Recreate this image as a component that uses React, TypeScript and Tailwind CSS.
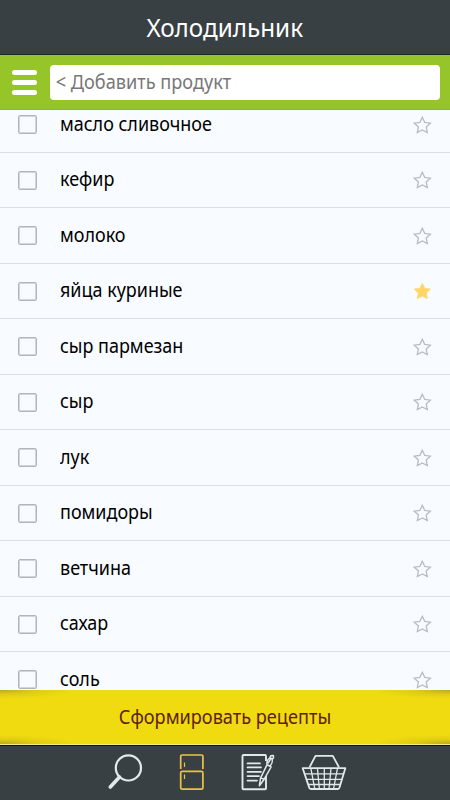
import { useState } from 'react';
import clsx from 'clsx';

interface Product {
  name: string;
  favorite?: boolean;
}

const PRODUCTS: Product[] = [
  { name: 'масло сливочное' },
  { name: 'кефир' },
  { name: 'молоко' },
  { name: 'яйца куриные', favorite: true },
  { name: 'сыр пармезан' },
  { name: 'сыр' },
  { name: 'лук' },
  { name: 'помидоры' },
  { name: 'ветчина' },
  { name: 'сахар' },
  { name: 'соль' },
];

function Star({ filled }: { filled?: boolean }) {
  return (
    <svg
      width="20"
      height="20"
      viewBox="0 0 20 20"
      className={filled ? 'fill-[#ffd566] stroke-[#ffd566]' : 'fill-none stroke-[#babdc0]'}
      strokeWidth={filled ? 0.8 : 1.3}
      strokeLinejoin="miter"
    >
      <path d="M10.3 2.3l2.4 5.1 5.7.7-4.2 3.9 1.1 5.6-5-2.7-5 2.7 1.1-5.6-4.2-3.9 5.7-.7z" />
    </svg>
  );
}

function SearchIcon() {
  return (
    <svg width="38" height="40" viewBox="0 0 38 40" fill="none" className="stroke-[#e3e8ec]">
      <circle cx="22.4" cy="15.9" r="12.6" strokeWidth="2.2" />
      <path d="M13.5 25L4.3 35" strokeWidth="3.6" strokeLinecap="round" />
    </svg>
  );
}

function FridgeIcon() {
  return (
    <svg width="28" height="40" viewBox="0 0 28 40" fill="none" className="stroke-[#e9c24b]">
      <path d="M2.7 17V4.5a1.5 1.5 0 0 1 1.5-1.5h19.2a1.5 1.5 0 0 1 1.5 1.5V17" strokeWidth="1.7" />
      <rect x="2.7" y="19.3" width="22.2" height="17.9" rx="1.5" strokeWidth="1.7" />
      <path d="M6.5 10.5V15M6.5 22.5V27" strokeWidth="1.2" />
    </svg>
  );
}

function RecipeIcon() {
  return (
    <svg width="36" height="40" viewBox="0 0 36 40" fill="none" className="stroke-[#e3e8ec]">
      <path d="M26 9V4a1 1 0 0 0-1-1H3.5a1 1 0 0 0-1 1v32.2a1 1 0 0 0 1 1H25a1 1 0 0 0 1-1V24" strokeWidth="1.9" />
      <path d="M7.5 11.4H20M7.5 15.4H21M7.5 19.8H21M7.5 24.1H19M7.5 28.6H17" strokeWidth="1.7" strokeLinecap="round" />
      <path
        d="M19.4 33.7l1.2-7.8 6.5-13.2 4 2.3-6.9 12.2zM20.6 25.9l3.6 1.3M27.1 12.7c-.8-2.3.5-5.6 3-7l2 1.2c.6 3-.6 6.3-3 7.4M29.9 5.7l1-2 2.5-.2.1 2.2-1.4 1.8M28 11.4l3-5"
        strokeWidth="1.5"
        strokeLinejoin="round"
      />
    </svg>
  );
}

function BasketIcon() {
  return (
    <svg width="48" height="40" viewBox="0 0 48 40" fill="none" className="stroke-[#e3e8ec]" strokeLinejoin="round">
      <path d="M9.5 15.3l6-11.4h17.3l6.2 11.4" strokeWidth="1.8" />
      <path d="M2.7 16.2h42.6l-5.8 19.4a1.8 1.8 0 0 1-1.8 1.4H11a1.8 1.8 0 0 1-1.8-1.4z" strokeWidth="1.8" />
      <path
        d="M4.7 21.8h38.6M6.4 27.3h35.2M8 32.5h32M10.8 16.2l4 20.8M17.4 16.2l2 20.8M24.3 16.2V37M31 16.2L29 37M37.5 16.2l-4 20.8"
        strokeWidth="1.3"
      />
    </svg>
  );
}

export default function App() {
  const [products, setProducts] = useState(PRODUCTS);
  const [checked, setChecked] = useState<string[]>([]);
  const [query, setQuery] = useState('');

  const toggleChecked = (name: string) => {
    setChecked((prev) => (prev.includes(name) ? prev.filter((n) => n !== name) : [...prev, name]));
  };

  const toggleFavorite = (name: string) => {
    setProducts((prev) => prev.map((p) => (p.name === name ? { ...p, favorite: !p.favorite } : p)));
  };

  return (
    <div className="flex h-[800px] w-[450px] flex-col overflow-hidden bg-[#f8fbff] font-['Noto_Sans','Open_Sans',sans-serif]">
      <header className="flex h-[55px] shrink-0 items-center justify-center border-b border-[#1c2c20] bg-[#394043]">
        <h1 className="scale-x-[0.97] text-[25px] leading-none text-white">Холодильник</h1>
      </header>

      <div className="flex h-[55px] shrink-0 items-center border-b border-[#8bb82e] bg-[#95c528] pr-2.5 pl-3">
        <button className="mr-[13px] flex w-[25px] flex-col gap-[5px]" aria-label="Меню">
          <span className="h-[5px] rounded-full bg-white" />
          <span className="h-[5px] rounded-full bg-white" />
          <span className="h-[5px] rounded-full bg-white" />
        </button>
        <div className="h-[35px] min-w-0 flex-1 rounded-[4px] bg-white">
          <input
            value={query}
            onChange={(e) => setQuery(e.target.value)}
            placeholder="&lt; Добавить продукт"
            className="h-full w-full origin-left scale-x-[0.955] px-1.5 text-[19px] text-black outline-none placeholder:text-[#777]"
          />
        </div>
      </div>

      {/* Product list */}
      <main className="min-h-0 flex-1 overflow-hidden">
        <ul className="-mt-[13px]">
          {products.map((p) => (
            <li key={p.name} className="flex h-[55.5px] items-center border-b border-[#dce0e4] pr-[18px] pl-[18px]">
              <button
                onClick={() => toggleChecked(p.name)}
                aria-label={p.name}
                className={clsx(
                  'mt-px size-[19px] shrink-0 rounded-[2px] border border-[#b3b6b9] shadow-[inset_0_0_0_1px_#d3d6d9]',
                  checked.includes(p.name) && 'bg-[#95c528]'
                )}
              />
              <span className="ml-[23px] flex-1 origin-left scale-x-[0.945] text-[19px] leading-none text-black">
                {p.name}
              </span>
              <button onClick={() => toggleFavorite(p.name)} className="mt-px" aria-label="Избранное">
                <Star filled={p.favorite} />
              </button>
            </li>
          ))}
        </ul>
      </main>

      <button className="h-[55px] shrink-0 border-b border-[#f5e98a] bg-[#f0da10] bg-[radial-gradient(ellipse_75px_9px_at_0_0,#a3942cb0,#b5a31c40_50%,#f0da1000),radial-gradient(ellipse_75px_9px_at_100%_0,#a3942cb0,#b5a31c40_50%,#f0da1000),radial-gradient(ellipse_75px_9px_at_0_100%,#a3942cb0,#b5a31c40_50%,#f0da1000),radial-gradient(ellipse_75px_9px_at_100%_100%,#a3942cb0,#b5a31c40_50%,#f0da1000)] bg-no-repeat text-[19px] text-[#5e2110]">
        <span className="block scale-x-[0.955]">Сформировать рецепты</span>
      </button>

      {/* Bottom navigation */}
      <nav className="flex h-[55px] shrink-0 border-t border-[#0c1218] bg-[#394043] pt-1.5 pl-[106px]">
        <button className="mr-[34px] h-10" aria-label="Поиск">
          <SearchIcon />
        </button>
        <button className="mr-[34px] h-10" aria-label="Холодильник">
          <FridgeIcon />
        </button>
        <button className="mr-6 h-10" aria-label="Рецепты">
          <RecipeIcon />
        </button>
        <button className="h-10" aria-label="Корзина">
          <BasketIcon />
        </button>
      </nav>
    </div>
  );
}
